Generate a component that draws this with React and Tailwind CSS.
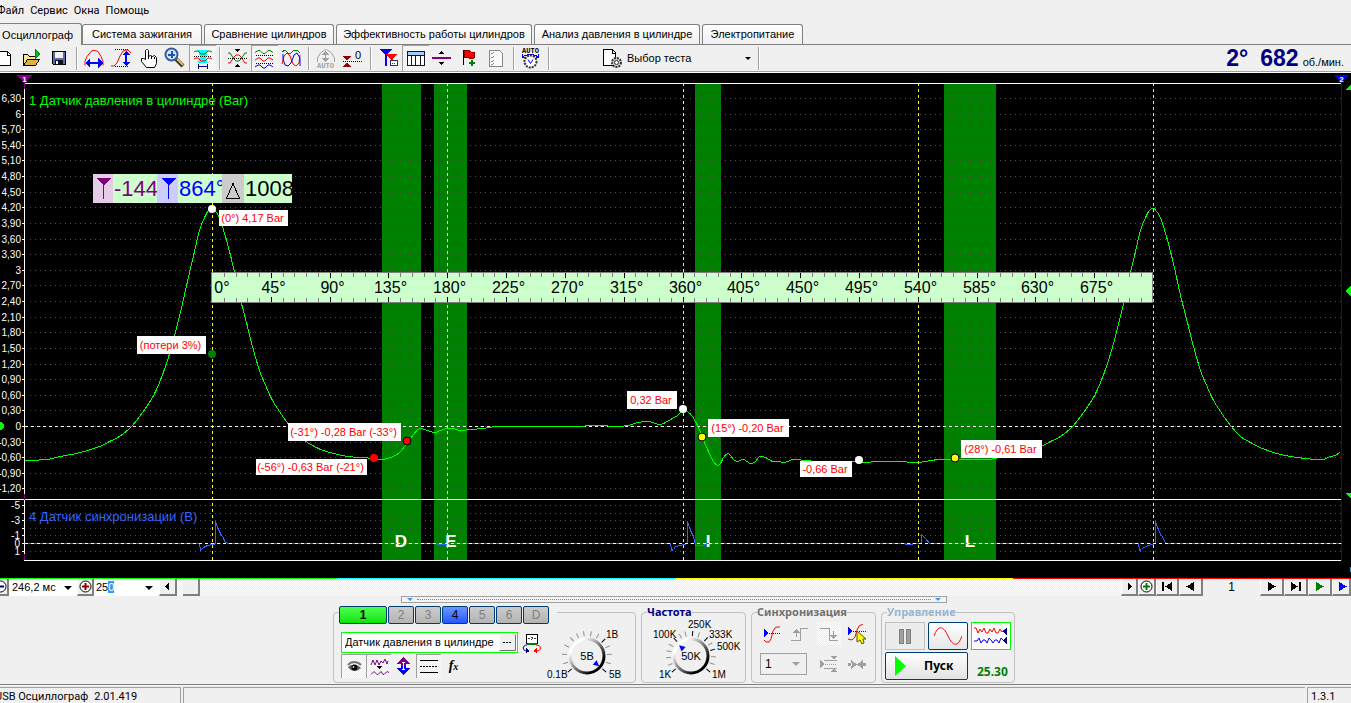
import React from 'react';

const TABS = [
  { label: 'Система зажигания', width: 'w-[120px]' },
  { label: 'Сравнение цилиндров', width: 'w-[130px]' },
  { label: 'Эффективность работы цилиндров', width: 'w-[196px]' },
  { label: 'Анализ давления в цилиндре', width: 'w-[166px]' },
  { label: 'Электропитание', width: 'w-[101px]' },
];

const HATCH = 'bg-[repeating-conic-gradient(#ffffff_0_25%,#ececec_0_50%)] bg-[length:2px_2px]';

// ---------- Toolbar ----------

const Icon = ({ children, w = 26, h = 26 }) => (
  <svg width={w} height={h} viewBox={`0 0 ${w} ${h}`} fill="none" className="block shrink-0" shapeRendering="crispEdges" aria-hidden="true">
    {children}
  </svg>
);

const ToolButton = ({ label, active, children }) => (
  <button
    type="button"
    aria-label={label}
    aria-pressed={active}
    className={`h-[26px] w-[27px] shrink-0 overflow-hidden ${active ? `border-t border-l border-[#a0a0a0] ${HATCH}` : ''}`}
  >
    {children}
  </button>
);

const Separator = () => <div className="mx-[3px] mt-0.5 h-[23px] w-0.5 shrink-0 border-l border-[#a0a0a0] bg-white" />;

const IconOpen = () => (
  <Icon>
    <path d="M4.500 20.500V9.500h4l2 2h6v3" stroke="#000" fill="#ffe48a" />
    <path d="M4.500 20.500l4-6h12l-4 6z" stroke="#000" fill="#d9b440" />
    <path d="M16 4v10l6-5z" fill="#008000" />
    <path d="M17 6v6l4-3z" fill="#00c020" />
  </Icon>
);

const IconSave = () => (
  <Icon>
    <path d="M6.500 6.500h13v13h-12l-1-1z" stroke="#000" fill="#5a6cb0" />
    <rect x="9" y="7" width="8" height="6" fill="#f4f4f4" />
    <rect x="9" y="15" width="8" height="5" fill="#101020" />
    <rect x="10" y="16" width="2" height="3" fill="#fff" />
  </Icon>
);

const IconPeriod = () => (
  <Icon>
    <path d="M4 20.500v-4l2-5 4-5 2-1h2l3 1 3 5 2 5v4" stroke="#ff0000" shapeRendering="auto" />
    <path d="M7 18h12" stroke="#0000ff" strokeWidth="2" />
    <path d="M9 13v10l-5-5zM17 13v10l5-5z" fill="#0000ff" />
  </Icon>
);

const IconAmplitude = () => (
  <Icon>
    <path d="M7 4.500h13M7 21.500h14" stroke="#000" strokeDasharray="1 1" />
    <path d="M3 21h3l3-3 3-7 3-5 3-1h2l3 3" stroke="#ff0000" shapeRendering="auto" />
    <path d="M18 8v10" stroke="#0000ff" strokeWidth="2" />
    <path d="M14 10h8l-4-4zM14 17h8l-4 4z" fill="#0000ff" />
  </Icon>
);

const IconHand = () => (
  <Icon>
    <path d="M10.500 14.500V5.500l1-1h1l1 1v6l2-1 2 1 2-1 2 2v6l-2 4h-8l-5-6v-3h2z" stroke="#000" fill="#fff" shapeRendering="auto" />
    <path d="M13.500 11v3M16.500 11v3M19.500 12v2" stroke="#000" />
  </Icon>
);

const IconZoom = () => (
  <Icon>
    <path d="M14 14l7 7" stroke="#403010" strokeWidth="4" shapeRendering="auto" />
    <path d="M15 14l6 6" stroke="#e0c070" strokeWidth="2" shapeRendering="auto" />
    <circle cx="9.500" cy="9.500" r="6" fill="#cfe4ff" stroke="#3a5a9a" strokeWidth="2" shapeRendering="auto" />
    <path d="M6 9.500h7M9.500 6v7" stroke="#2050b0" strokeWidth="2" />
  </Icon>
);

const IconFit = () => (
  <Icon>
    <path d="M8 4h10l-2 7 2 6H8l2-6z" fill="#00ffff" />
    <path d="M4 6l2-1h2l3 3h4l3-3h2l2 1" stroke="#008000" shapeRendering="auto" />
    <path d="M4 10.500h18" stroke="#000" strokeDasharray="1 1" />
    <path d="M4 13l2-1h2l3 3h4l3-3h2l2 1" stroke="#ff0000" shapeRendering="auto" />
    <path d="M8.500 18v5M17.500 18v5M9 20.500h8" stroke="#000080" />
  </Icon>
);

const IconCross = () => (
  <Icon>
    <path d="M4 8h2l4 6 2 2h3l2-2 4-6h2" stroke="#008000" shapeRendering="auto" />
    <path d="M4 18h2l4-6 2-2h3l2 2 4 6h2" stroke="#ff0000" shapeRendering="auto" />
    <path d="M4 13.500h19" stroke="#000" strokeDasharray="1 1" />
    <path d="M10 4h6l-3 3zM10 22h6l-3-3z" fill="#000" />
  </Icon>
);

const Wave = ({ y, color }) => <path d={`M3 ${y + 2}l3-2h2l3 3h2l3-3h2l3 2`} stroke={color} shapeRendering="auto" />;

const IconWaves = () => (
  <Icon>
    <Wave y={4.5} color="#008000" />
    <Wave y={12} color="#ff0000" />
    <Wave y={19} color="#0000ff" />
    <path d="M4 9.500h18M4 17.500h18" stroke="#000" strokeDasharray="1 1" />
  </Icon>
);

const IconWavesMixed = () => (
  <Icon>
    <path d="M4 7l3-2 3 3h3l3-3h3l3 3" stroke="#008000" />
    <path d="M4 19l2-8 3-3 3 3 3 8 3 2 3-3 1-8" stroke="#ff0000" shapeRendering="auto" />
    <path d="M5 9v5l2 6 3 1 3-3 3-8 3-2 3 5v8" stroke="#0000ff" shapeRendering="auto" />
  </Icon>
);

const IconAuto = () => (
  <Icon>
    <path d="M4.500 17v-4l3-5 4-3h3l4 3 3 5v4" stroke="#a0a0a0" shapeRendering="auto" />
    <path d="M12.500 7v9" stroke="#a0a0a0" />
    <path d="M9 10h7l-3.500-4zM9 13h7l-3.500 4z" fill="#a0a0a0" />
    <text x="12.500" y="23" textAnchor="middle" fill="#a0a0a0" className="font-['Liberation_Mono'] text-[7px] font-bold">AUTO</text>
  </Icon>
);

const IconZero = () => (
  <Icon>
    <path d="M3 11h8l-4 5zM3 22h8l-4-5z" fill="#900000" />
    <path d="M3 16.500h19" stroke="#000" strokeDasharray="1 1" />
    <text x="15" y="14" fill="#000" className="font-['Liberation_Sans'] text-[11px]">0</text>
  </Icon>
);

const IconMarkers = () => (
  <Icon>
    <path d="M4 4h13l-5 6v11h-2V10z" fill="#0000ff" />
    <path d="M10 9h12l-4 5v6h-2v-6z" fill="#ff0000" />
    <rect x="15.500" y="15.500" width="7" height="5" fill="#fff" stroke="#303060" />
    <path d="M17 18.500h4" stroke="#303060" strokeDasharray="1 1" />
  </Icon>
);

const IconTable = () => (
  <Icon>
    <rect x="4.500" y="5.500" width="17" height="14" fill="#fff" stroke="#101828" />
    <rect x="5" y="6" width="16" height="3" fill="#a6cdf4" />
    <path d="M5 9.500h16M8.500 9v10M12.500 9v10M17.500 9v10" stroke="#101828" />
  </Icon>
);

const IconSplit = () => (
  <Icon>
    <path d="M3 13h19" stroke="#800080" strokeWidth="2" />
    <path d="M10 9h5l-2.500-3zM10 17h5l-2.500 3z" fill="#000" />
  </Icon>
);

const IconFlag = () => (
  <Icon>
    <path d="M7.500 5v15" stroke="#000" />
    <path d="M8 6l4-1 3 2h3v6l-3 1-3-2-4 1z" fill="#ff0000" stroke="#900000" />
    <path d="M16 15v6M13 18h6" stroke="#008000" strokeWidth="2" />
  </Icon>
);

const IconChecklist = () => (
  <Icon>
    <path d="M6.500 5.500h10l3 3v13h-13z" fill="#fafafa" stroke="#888" />
    <path d="M8 8l1 1 2-2M8 12l1 1 2-2M8 16l1 1 2-2M8 20l1 0 2-2" stroke="#888" shapeRendering="auto" />
  </Icon>
);

const IconAutoVolt = () => (
  <Icon>
    <text x="12.500" y="8" textAnchor="middle" fill="#000" className="font-['Liberation_Mono'] text-[7px] font-bold">AUTO</text>
    <path d="M5 12c3-3 12-3 15 0M4.500 9v3h3M20.500 9v3h-3" stroke="#0000ff" />
    <circle cx="12.500" cy="16.500" r="6" stroke="#333" strokeDasharray="2 1" strokeWidth="2" fill="#fff" shapeRendering="auto" />
    <path d="M10 14.500l2.500 4 2.500-4" stroke="#0000ff" shapeRendering="auto" />
  </Icon>
);

const Toolbar = () => (
  <div className="flex h-[27px] items-start border-b border-[#a0a0a0]">
    <button type="button" aria-label="Создать" className="h-[26px] w-[19px] shrink-0 overflow-hidden">
      <Icon>
        <path d="M-2 6.500h9.500l3 3v10.500H-2z" fill="#fff" stroke="#000" />
        <path d="M7.500 6v4h3" stroke="#000" />
      </Icon>
    </button>
    <ToolButton label="Открыть"><IconOpen /></ToolButton>
    <ToolButton label="Сохранить"><IconSave /></ToolButton>
    <Separator />
    <ToolButton label="Период"><IconPeriod /></ToolButton>
    <ToolButton label="Амплитуда"><IconAmplitude /></ToolButton>
    <ToolButton label="Рука"><IconHand /></ToolButton>
    <ToolButton label="Масштаб"><IconZoom /></ToolButton>
    <ToolButton label="Вписать" active><IconFit /></ToolButton>
    <Separator />
    <ToolButton label="Совместить"><IconCross /></ToolButton>
    <ToolButton label="Раздельно" active><IconWaves /></ToolButton>
    <ToolButton label="Вместе"><IconWavesMixed /></ToolButton>
    <Separator />
    <ToolButton label="Авто"><IconAuto /></ToolButton>
    <ToolButton label="Ноль"><IconZero /></ToolButton>
    <Separator />
    <ToolButton label="Маркеры"><IconMarkers /></ToolButton>
    <ToolButton label="Таблица" active><IconTable /></ToolButton>
    <ToolButton label="Разделитель"><IconSplit /></ToolButton>
    <ToolButton label="Флаг"><IconFlag /></ToolButton>
    <ToolButton label="Список"><IconChecklist /></ToolButton>
    <Separator />
    <ToolButton label="Автонастройка"><IconAutoVolt /></ToolButton>
    <Separator />
    <button type="button" className="flex h-[27px] w-[202px] shrink-0 items-center pl-[48px] pr-1">
      <Icon>
        <path d="M2.500 3.500h9l3 3v13h-12z" fill="#fff" stroke="#000" />
        <path d="M11.500 3v4h3" stroke="#000" />
        <circle cx="15.500" cy="16.500" r="4.500" fill="#c8dcc8" stroke="#333" strokeWidth="2" strokeDasharray="2 1" shapeRendering="auto" />
        <circle cx="15.500" cy="16.500" r="2" fill="#fff" stroke="#333" shapeRendering="auto" />
      </Icon>
      <span className="grow text-left">Выбор теста</span>
      <span className="border-x-[3px] border-t-[3px] border-x-transparent border-t-black" />
    </button>
    <Separator />
    <div className="ml-auto flex items-baseline pr-[7px] font-['Liberation_Sans',sans-serif] text-[23px] leading-[27px] font-bold text-[#000080]">
      <span>2°</span>
      <span className="ml-3">682</span>
      <span className="ml-1 text-[11px] font-normal text-black">об./мин.</span>
    </div>
  </div>
);

// ---------- Oscillogram ----------

const CHART_W = 1351;
const CHART_H = 505;
const LEFT = 25;
const RIGHT = 1341;
const yBar = (v) => Math.round(353 - v * 52.08) + 0.5;
const xDeg = (d) => Math.round(212 + (d * 941) / 720) + 0.5;

const BAR_TICKS = Array.from({ length: 26 }, (_, i) => Math.round((6.3 - i * 0.3) * 10) / 10);
const formatBar = (v) => (Number.isInteger(v) ? `${v}` : v.toFixed(2).replace('.', ','));

const SYNC_TICKS = [
  { y: 432.5, label: '-5' },
  { y: 440.5 },
  { y: 447.5, label: '-3' },
  { y: 455.5 },
  { y: 462.5, label: '-1' },
  { y: 470.5, label: '0' },
  { y: 478.5, label: '1' },
];

const BANDS = [
  { x: 382, w: 39, letter: 'D', lx: 401 },
  { x: 434, w: 33, letter: 'E', lx: 451 },
  { x: 695, w: 26, letter: 'I', lx: 708 },
  { x: 944, w: 52, letter: 'L', lx: 970 },
];

const PRESSURE = [
  [25, 387], [46, 386], [60, 383], [80, 379], [99, 373], [109, 368], [119, 363], [131, 353], [142, 339], [152, 324],
  [159, 309], [166, 290], [172, 270], [178, 247], [182, 230], [189, 199], [194, 178], [199, 157], [204, 144], [208, 137],
  [212, 135], [215, 138], [218, 142], [222, 153], [229, 178], [234, 199], [239, 222], [246, 249], [252, 273], [259, 297],
  [266, 314], [272, 327], [281, 341], [289, 352], [298, 362], [307, 369], [320, 376], [333, 380], [347, 383], [360, 384],
  [374, 385], [382, 386], [393, 383], [400, 378], [407, 369], [413, 361], [419, 355], [427, 357], [434, 359], [440, 357],
  [447, 355], [453, 355], [460, 357], [470, 356], [483, 355], [500, 353], [567, 353], [600, 352], [613, 353], [628, 352],
  [637, 349], [647, 348], [652, 349], [659, 351], [663, 350], [672, 345], [677, 342], [683, 336], [687, 338], [692, 343],
  [697, 352], [702, 364], [707, 376], [713, 388], [717, 392], [720, 390], [723, 384], [727, 380], [730, 382], [733, 386],
  [737, 388], [743, 386], [750, 390], [755, 388], [759, 383], [765, 384], [772, 388], [778, 388], [784, 389], [792, 386],
  [797, 386], [805, 387], [830, 389], [855, 388], [859, 387], [863, 389], [877, 388], [900, 388], [917, 389], [940, 386],
  [987, 386], [1001, 383], [1021, 379], [1040, 373], [1050, 368], [1060, 363], [1072, 353], [1083, 339], [1093, 324],
  [1100, 309], [1107, 290], [1113, 270], [1119, 247], [1123, 230], [1130, 199], [1135, 178], [1140, 157], [1145, 144],
  [1149, 137], [1153, 135], [1156, 138], [1159, 142], [1163, 153], [1170, 178], [1175, 199], [1180, 222], [1187, 249],
  [1193, 273], [1200, 297], [1207, 314], [1213, 327], [1222, 341], [1230, 352], [1240, 363], [1250, 369], [1262, 375],
  [1280, 381], [1297, 384], [1315, 386], [1323, 386], [1330, 383], [1335, 382], [1340, 378],
];

const SYNC = [
  [25, 470], [199, 470], [200, 477], [201, 476], [203, 474], [207, 472], [213, 471], [215, 470], [215, 448], [217, 454],
  [221, 462], [223, 464], [224, 468], [227, 470], [436, 470], [438, 471], [445, 471], [448, 470], [670, 470], [671, 477],
  [673, 476], [675, 473], [680, 472], [687, 470], [687, 448], [690, 457], [693, 463], [695, 472], [702, 472], [708, 470],
  [904, 470], [906, 471], [911, 471], [913, 470], [921, 470], [921, 461], [925, 465], [929, 470], [1138, 470], [1139, 477],
  [1141, 476], [1143, 474], [1148, 472], [1155, 470], [1155, 448], [1159, 459], [1163, 465], [1165, 470], [1341, 470],
];

const toPoints = (list) => list.map(([x, y]) => `${x + 0.5},${y + 0.5}`).join(' ');

// Catmull-Rom spline through the samples
const toCurve = (list) => {
  const p = list.map(([x, y]) => [x + 0.5, y + 0.5]);
  let d = `M${p[0][0]} ${p[0][1]}`;
  for (let i = 0; i < p.length - 1; i++) {
    const a = p[i - 1] || p[i];
    const b = p[i];
    const c = p[i + 1];
    const e = p[i + 2] || c;
    d += `C${b[0] + (c[0] - a[0]) / 6} ${b[1] + (c[1] - a[1]) / 6} ${c[0] - (e[0] - b[0]) / 6} ${c[1] - (e[1] - b[1]) / 6} ${c[0]} ${c[1]}`;
  }
  return d;
};

const CALLOUTS = [
  { text: '(0°) 4,17 Bar', x: 219, y: 137, w: 69, h: 16 },
  { text: '(потери 3%)', x: 137, y: 263, w: 69, h: 18 },
  { text: '(-31°) -0,28 Bar (-33°)', x: 288, y: 350, w: 113, h: 18 },
  { text: '(-56°) -0,63 Bar (-21°)', x: 256, y: 386, w: 111, h: 16 },
  { text: '0,32 Bar', x: 627, y: 318, w: 50, h: 18 },
  { text: '(15°) -0,20 Bar', x: 708, y: 346, w: 81, h: 18 },
  { text: '-0,66 Bar', x: 800, y: 388, w: 52, h: 16 },
  { text: '(28°) -0,61 Bar', x: 961, y: 367, w: 81, h: 18 },
];

const POINTS = [
  { x: 212, y: 136, fill: '#ffffff' },
  { x: 212, y: 281, fill: '#008000' },
  { x: 374, y: 385, fill: '#ff0000' },
  { x: 407, y: 368, fill: '#ff0000', ring: true },
  { x: 683, y: 336, fill: '#ffffff' },
  { x: 702, y: 364, fill: '#ffff00', ring: true },
  { x: 859, y: 387, fill: '#ffffff' },
  { x: 955, y: 385, fill: '#ffff00', ring: true },
];

const MarkerReadout = () => (
  <svg x="93" y="101" width="199" height="29">
    <rect width="199" height="29" fill="#ccffcc" />
    <rect width="20" height="29" fill="#e6cce6" />
    <path d="M3 4h15l-7 7v14h-1V11z" fill="#800080" />
    <text x="21" y="22" fill="#800080" className="text-[22px]">-144°</text>
    <rect x="64" width="135" height="29" fill="#ccffcc" />
    <rect x="64" width="21" height="29" fill="#ccccff" />
    <path d="M68 4h15l-7 7v14h-1V11z" fill="#0000ff" />
    <text x="86" y="22" fill="#0000ff" className="text-[22px]">864°</text>
    <rect x="129" width="70" height="29" fill="#ccffcc" />
    <rect x="129" width="22" height="29" fill="#cccccc" />
    <path d="M133.500 24.500h13l-6.500-15z" fill="none" stroke="#000" />
    <text x="152" y="22" fill="#000" className="text-[22px]">1008°</text>
  </svg>
);

const DegreeRuler = () => (
  <g>
    <rect x="211.500" y="199.500" width="941" height="30" fill="#ccffcc" stroke="#808080" />
    {Array.from({ length: 79 }, (_, i) => (i + 1) * 9).map((d) => {
      const major = d % 45 === 0;
      const len = major ? 5 : 4;
      return (
        <path key={d} d={`M${xDeg(d)} 200v${len}M${xDeg(d)} ${229 - len}v${len}`} stroke={major ? '#000' : '#808080'} />
      );
    })}
    {Array.from({ length: 16 }, (_, i) => i * 45).map((d) => (
      <text key={d} x={d === 0 ? 222 : xDeg(d) + 2} y="220" textAnchor="middle" fill="#000" className="text-[16px]">
        {d}°
      </text>
    ))}
  </g>
);

const Oscillogram = () => (
  <svg
    viewBox={`0 0 ${CHART_W} ${CHART_H}`}
    className="block w-full bg-black font-['Liberation_Sans',sans-serif]"
    shapeRendering="crispEdges"
    role="img"
    aria-label="Осциллограмма"
  >
    {BANDS.map((b) => (
      <rect key={b.letter} x={b.x} y="11" width={b.w} height="476" fill="#008000" />
    ))}

    {/* grid */}
    {BAR_TICKS.map((v) => (
      <g key={v}>
        <path d={`M30 ${yBar(v)}H${RIGHT}`} stroke="#555055" strokeDasharray="1 4" />
        <path d={`M22 ${yBar(v)}h3`} stroke="#fff" />
        <text x="21" y={yBar(v) + 3} textAnchor="end" fill="#fff" className="text-[10px]">{formatBar(v)}</text>
      </g>
    ))}
    {SYNC_TICKS.map((t) => (
      <g key={t.y}>
        <path d={`M30 ${t.y}H${RIGHT}`} stroke="#555055" strokeDasharray="1 4" />
        <path d={`M22 ${t.y}h3`} stroke="#fff" />
        <text x="20" y={t.y + 3} textAnchor="end" fill="#fff" className="text-[10px]">{t.label}</text>
      </g>
    ))}

    {/* frame */}
    <path d={`M${LEFT} 10.500H${RIGHT}M0 426.500H${RIGHT}M${LEFT} 487.500H${RIGHT}M24.500 10V488`} stroke="#fff" />
    <path d="M24.500 10v6M24.500 421v6M24.500 481v6" stroke="#800080" />
    <path d="M1341.500 4V488" stroke="#0000ff" />

    {/* traces */}
    <text x="29" y="32" fill="#00ff00" className="text-[13px]">1 Датчик давления в цилиндре (Bar)</text>
    <text x="29" y="448" fill="#3366ff" className="text-[13px]">4 Датчик синхронизации (В)</text>
    {BANDS.map((b) => (
      <text key={b.letter} x={b.lx} y="474" textAnchor="middle" fill="#fff" className="text-[17px] font-bold">{b.letter}</text>
    ))}
    <polyline points={toPoints(SYNC)} fill="none" stroke="#3366ff" />
    <path d={`M${LEFT} 353.500H${RIGHT}M${LEFT} 470.500H${RIGHT}`} stroke="#fff" strokeDasharray="3 3" />
    <path d={toCurve(PRESSURE)} fill="none" stroke="#00ff00" />
    {[0, 180, 360, 540, 720].map((d) => (
      <path key={d} d={`M${xDeg(d)} 10V487`} stroke="#ffff00" strokeDasharray="3 3" />
    ))}

    <DegreeRuler />
    <MarkerReadout />

    {POINTS.map((p) => (
      <circle key={`${p.x}-${p.y}`} cx={p.x} cy={p.y} r="4" fill={p.fill} stroke={p.ring ? '#000' : 'none'} shapeRendering="auto" />
    ))}
    {CALLOUTS.map((c) => (
      <g key={c.text}>
        <rect x={c.x} y={c.y} width={c.w} height={c.h} fill="#fff" />
        <text x={c.x + c.w / 2 - 1} y={c.y + c.h / 2 + 4} textAnchor="middle" fill="#ff0000" className="text-[11px]">{c.text}</text>
      </g>
    ))}

    {/* cursor handles */}
    <path d="M17 2h15l-7.500 8z" fill="#800080" />
    <text x="24.500" y="9" textAnchor="middle" fill="#fff" className="text-[8px] font-bold">1</text>
    <path d="M1334 2h15l-7.500 8z" fill="#0000ff" />
    <text x="1341.500" y="9" textAnchor="middle" fill="#fff" className="text-[8px] font-bold">2</text>
    <path d="M1351 11l-6 6h6zM1351 213l-6 5 6 6zM1345 420h6v6z" fill="#00ff00" />
    <circle cx="0" cy="353" r="4" fill="#00ff00" />
    <rect x="1350" y="494" width="1" height="5" fill="#2aa0c0" />
  </svg>
);

const CylinderStrip = () => (
  <div className="flex h-px">
    <div className="grow bg-[#00ff00]" />
    <div className="grow bg-[#00ffff]" />
    <div className="grow bg-[#ffff00]" />
    <div className="grow bg-[#ff0000]" />
  </div>
);

// ---------- Navigation bar ----------

const RaisedButton = ({ label, width, children }) => (
  <button
    type="button"
    aria-label={label}
    className={`flex h-[17px] shrink-0 items-center justify-center border-r-2 border-b-2 border-l border-r-[#808080] border-b-[#808080] border-l-white bg-[#f0f0f0] ${width}`}
  >
    {children}
  </button>
);

const Glyph = ({ d, fill = '#000' }) => (
  <Icon w={13} h={9}>
    <path d={d} fill={fill} />
  </Icon>
);

const DownArrow = () => <span className="border-x-[4px] border-t-[4px] border-x-transparent border-t-black" />;

const CircleSign = ({ color, plus }) => (
  <svg width="13" height="13" viewBox="0 0 13 13" fill="none" className="block shrink-0" aria-hidden="true">
    <circle cx="6.500" cy="6.500" r="5.500" fill="#fff" stroke="#000" />
    <path d={plus ? 'M3 6.500h7M6.500 3v7' : 'M3 6.500h7'} stroke={color} strokeWidth="2" />
  </svg>
);

const NavBar = () => (
  <div className={`flex h-[17px] items-center ${HATCH}`}>
    <button type="button" aria-label="Уменьшить" className="flex h-[17px] w-[9px] shrink-0 items-center justify-end overflow-hidden border-r-2 border-b-2 border-[#808080] bg-[#f0f0f0]">
      <CircleSign color="#000080" />
    </button>
    <button type="button" className="flex h-[17px] w-[68px] shrink-0 items-center justify-between bg-white pl-[3px] pr-[5px] whitespace-nowrap">
      246,2 мс <DownArrow />
    </button>
    <RaisedButton label="Увеличить" width="w-[17px]"><CircleSign color="#900000" plus /></RaisedButton>
    <button type="button" className="flex h-[17px] w-[65px] shrink-0 items-center justify-between bg-white pl-[2px] pr-[6px]">
      <span>25<span className="bg-[#3399ff] text-white">0</span></span> <DownArrow />
    </button>
    <RaisedButton label="Влево" width="w-[18px]"><Glyph d="M8 0v9L4 4.500z" /></RaisedButton>
    <div className="ml-[6px] h-[17px] w-[17px] border-r-2 border-b-2 border-[#808080] bg-[#f0f0f0]" />
    <div className="grow" />
    <RaisedButton label="Вправо" width="w-[17px]"><Glyph d="M5 0v9l4-4.500z" /></RaisedButton>
    <RaisedButton label="Добавить" width="w-[18px]"><CircleSign color="#008000" plus /></RaisedButton>
    <RaisedButton label="В начало" width="w-[23px]"><Glyph d="M1 0h2v9H1zM11 0v9L4 4.500z" /></RaisedButton>
    <RaisedButton label="Назад" width="w-[24px]"><Glyph d="M10 0v9L2 4.500z" /></RaisedButton>
    <div className="h-[17px] w-[57px] bg-[#f0f0f0] text-center text-xs leading-[17px]">1</div>
    <RaisedButton label="Вперёд" width="w-[24px]"><Glyph d="M3 0v9l8-4.500z" /></RaisedButton>
    <RaisedButton label="В конец" width="w-[24px]"><Glyph d="M10 0h2v9h-2zM2 0v9l7-4.500z" /></RaisedButton>
    <RaisedButton label="Воспроизвести" width="w-[24px]"><Glyph d="M3 0v9l8-4.500z" fill="#008000" /></RaisedButton>
    <RaisedButton label="Дальше" width="w-[19px]"><Glyph d="M4 0v9l8-4.500z" fill="#0000ff" /></RaisedButton>
  </div>
);

const Splitter = () => (
  <div className="flex h-[7px] w-[546px] items-center gap-1 border border-[#a0a0a0] bg-[#f4f4f4] px-[5px]">
    <span className="border-x-[3px] border-t-[3px] border-x-transparent border-t-[#3399ff]" />
    <span className="grow border-t border-dotted border-[#3399ff]" />
    <span className="border-x-[3px] border-t-[3px] border-x-transparent border-t-[#3399ff]" />
  </div>
);

// ---------- Control panel ----------

const Group = ({ title, titleColor, width, children }) => (
  <fieldset className={`h-[77px] shrink-0 rounded-[4px] border border-[#c0c0c0] ${width}`}>
    <legend className={`ml-[5px] h-3 font-['Noto_Sans',sans-serif] text-[11px] leading-3 font-bold ${titleColor}`}>{title}</legend>
    {children}
  </fieldset>
);

const CHANNELS = ['2', '3', '4', '5', '6', 'D'];

const ChannelTabs = () => (
  <div className="flex h-[18px] gap-px pr-2 font-['Liberation_Sans',sans-serif] text-xs font-normal">
    <button type="button" className="h-[18px] w-[48px] rounded-[2px] border border-[#003c74] bg-linear-to-b from-[#4cff4c] to-[#00e400] leading-[16px] font-bold text-black">1</button>
    {CHANNELS.map((c) => (
      <button
        key={c}
        type="button"
        className={`h-[18px] w-[26px] rounded-[2px] border border-[#003c74] bg-linear-to-b leading-[16px] ${c === '4' ? 'from-[#6c94ff] to-[#2456ff] text-black' : 'from-[#cccccc] to-[#b4b4b4] text-[#808080]'}`}
      >
        {c}
      </button>
    ))}
  </div>
);

const SmallToggle = ({ label, active, children }) => (
  <button
    type="button"
    aria-label={label}
    aria-pressed={active}
    className={`flex h-6 w-[25px] items-center justify-center ${active ? `border-t border-l border-[#a0a0a0] ${HATCH}` : ''}`}
  >
    {children}
  </button>
);

// angles are in degrees, clockwise from 12 o'clock
const Knob = ({ w, cx, cy, value, pointer, ticks, majors, labels, label }) => (
  <svg width={w} height="65" viewBox={`0 0 ${w} 65`} role="slider" aria-label={label} aria-valuetext={value} aria-valuenow="0" className="block shrink-0 font-['Liberation_Sans',sans-serif]">
    <defs>
      <linearGradient id={`rim-${label}`} x1="0" y1="0" x2="1" y2="1">
        <stop offset="0.2" stopColor="#fff" />
        <stop offset="0.8" stopColor="#000" />
      </linearGradient>
    </defs>
    {ticks.map((a) => (
      <path key={a} d={`M${cx} ${cy - 20}v-5`} stroke={majors.includes(a) ? '#000' : '#909090'} transform={`rotate(${a} ${cx} ${cy})`} />
    ))}
    <circle cx={cx} cy={cy} r="17" fill="#f0f0f0" stroke={`url(#rim-${label})`} strokeWidth="3" />
    <path d={`M${cx - 3} ${cy - 10}h6l-3-6z`} fill="#0000ff" transform={`rotate(${pointer} ${cx} ${cy})`} />
    <text x={cx} y={cy + 4} textAnchor="middle" fill="#000" className="text-[11px]">{value}</text>
    {labels.map((l) => (
      <text key={l.text} x={l.x} y={l.y} fill="#000" className="text-[10px]">{l.text}</text>
    ))}
  </svg>
);

const ChannelGroup = () => (
  <Group title={<ChannelTabs />} titleColor="text-black" width="w-[303px]">
    <div className="flex">
      <div className="w-[210px] shrink-0 pt-[14px] pl-[7px]">
        <div className="flex items-center gap-1">
          <div className="flex h-[21px] w-[177px] items-center border border-[#00ff00] bg-white pr-px">
            <input aria-label="Название канала" defaultValue="Датчик давления в цилиндре" className="min-w-0 grow bg-transparent pl-[3px] font-['Liberation_Sans',sans-serif] text-[11px] outline-none" />
            <button type="button" aria-label="Выбрать датчик" className="flex h-[17px] w-[17px] shrink-0 items-center justify-center border border-r-[#707070] border-b-[#707070] border-l-white border-t-white bg-[#f0f0f0]">
              <Icon w={9} h={3}><path d="M0 1.500h2M3 1.500h2M6 1.500h2" stroke="#000" /></Icon>
            </button>
          </div>
          <Icon w={20} h={20}>
            <rect x="4.500" y="1.500" width="11" height="9" fill="#fff" stroke="#000" />
            <path d="M6 5h2M9 4h2M12 5h2M9 7l2-2" stroke="#444" />
            <path d="M5 11h10" stroke="#008000" strokeWidth="2" />
            <path d="M5 12c-5 0-5 6 0 6" stroke="#000080" shapeRendering="auto" />
            <path d="M4 15v5l4-2z" fill="#000080" />
            <path d="M14 12c6 0 6 6 0 6" stroke="#ff0000" shapeRendering="auto" />
            <path d="M15 15v5l-4-2z" fill="#ff0000" />
          </Icon>
        </div>
        <div className="mt-px flex">
          <SmallToggle label="Показать" active>
            <svg width="15" height="12" viewBox="0 0 15 12" aria-hidden="true">
              <path d="M1 4c3-4 9-4 13 0" fill="none" stroke="#777" strokeWidth="2" />
              <path d="M1 6c3-3 9-3 13 1-4 4-10 4-13-1z" fill="#666" />
              <circle cx="7.500" cy="6.500" r="3" fill="#000" />
              <circle cx="6.500" cy="6" r="1" fill="#ccc" />
            </svg>
          </SmallToggle>
          <SmallToggle label="Фильтр" active>
            <Icon w={19} h={18}>
              <path d="M1 7l2-5 2 5 2-5 2 5 2-4 2 2 2-4 2 5 1-3" stroke="#800080" shapeRendering="auto" />
              <path d="M6 8h6l-3 3z" fill="#000" />
              <path d="M1 16.500l3-3 3 3h1l3-3 2 3h1l3-3 2 1" stroke="#800080" shapeRendering="auto" />
            </Icon>
          </SmallToggle>
          <SmallToggle label="Смещение">
            <Icon w={15} h={18}>
              <path d="M7.500 0l7 7H10v2H5V7H0.500z" fill="#800080" />
              <path d="M7.500 18l7-7H10V9H5v2H0.500z" fill="#0000ff" />
              <path d="M7.500 5v8M6 5.500h3M6 12.500h3" stroke="#fff" />
            </Icon>
          </SmallToggle>
          <SmallToggle label="Линии" active>
            <Icon w={18} h={15}>
              <path d="M0 1.500h18M0 13.500h18" stroke="#000" />
              <path d="M0 7.500h18" stroke="#000" strokeDasharray="2 1" />
            </Icon>
          </SmallToggle>
          <SmallToggle label="Функция">
            <span className="font-['Liberation_Serif',serif] text-sm leading-none font-bold italic">f<span className="text-[10px]">x</span></span>
          </SmallToggle>
        </div>
      </div>
      <Knob
        w={90}
        cx={43}
        cy={38}
        value="5В"
        label="Чувствительность"
        pointer={130}
        ticks={[-130, -108, -86, -64, -42, -25, -8, 10, 28, 47, 66, 86, 108, 130]}
        majors={[-130, 47, 130]}
        labels={[{ text: '0.1В', x: 3, y: 60 }, { text: '1В', x: 62, y: 20 }, { text: '5В', x: 65, y: 60 }]}
      />
    </div>
  </Group>
);

const FrequencyGroup = () => (
  <Group title="Частота" titleColor="text-[#000080]" width="w-[105px]">
    <Knob
      w={103}
      cx={49}
      cy={38}
      value="50K"
      label="Частота"
      pointer={-48}
      ticks={[-130, -112, -94, -78, -62, -44, -28, -14, 4, 20, 42, 58, 74, 92, 110, 130]}
      majors={[-130, -44, 4, 42, 74, 130]}
      labels={[
        { text: '250K', x: 46, y: 10 },
        { text: '100K', x: 11, y: 20 },
        { text: '333K', x: 67, y: 20 },
        { text: '500K', x: 75, y: 32 },
        { text: '1K', x: 17, y: 60 },
        { text: '1M', x: 70, y: 60 },
      ]}
    />
  </Group>
);

const SyncButton = ({ label, hatched, children }) => (
  <button type="button" aria-label={label} className={`flex h-[23px] w-[24px] items-center justify-center ${hatched ? HATCH : ''}`}>
    {children}
  </button>
);

const SyncGroup = () => (
  <Group title="Синхронизация" titleColor="text-[#707070]" width="w-[125px]">
    <div className="flex justify-between pt-1 pl-2 pr-[6px]">
      <SyncButton label="Уровень">
        <Icon w={18} h={18}>
          <path d="M1 4v8l5-4z" fill="#0000ff" />
          <path d="M6 8.500h12" stroke="#0000ff" strokeDasharray="1 1" />
          <path d="M1 15l2 2h3l2-3 2-8 2-3 2-1h3" stroke="#ff0000" shapeRendering="auto" />
        </Icon>
      </SyncButton>
      <SyncButton label="По фронту">
        <Icon w={18} h={16}>
          <path d="M0 14.500h9.500V2.500h7M5.500 4v7" stroke="#a0a0a0" />
          <path d="M2 7h7l-3.500-4z" fill="#a0a0a0" />
        </Icon>
      </SyncButton>
      <SyncButton label="По спаду" hatched>
        <Icon w={18} h={16}>
          <path d="M0 2.500h9.500v12h8M13.500 5v8" stroke="#a0a0a0" />
          <path d="M10 9h7l-3.500 4z" fill="#a0a0a0" />
        </Icon>
      </SyncButton>
      <SyncButton label="Выбрать точку">
        <Icon w={20} h={20}>
          <path d="M1 3v8l5-4z" fill="#0000ff" />
          <path d="M6 7.500h14" stroke="#0000ff" strokeDasharray="1 1" />
          <path d="M1 15l4 1 3-3 2-7 2-4 4-2" stroke="#ff0000" shapeRendering="auto" />
          <path d="M10 7v11l3-2 2 4 2-1-1-4h3z" fill="#ffff00" stroke="#605000" shapeRendering="auto" />
        </Icon>
      </SyncButton>
    </div>
    <div className="flex items-center pt-[7px] pl-2">
      <div className="relative flex h-[22px] w-[47px] items-center border border-[#a0a0a0]">
        <select aria-label="Канал синхронизации" className="h-full w-full appearance-none bg-transparent pl-1 text-xs text-black">
          <option>1</option>
        </select>
        <span className="pointer-events-none absolute right-[6px] border-x-[4px] border-t-[4px] border-x-transparent border-t-[#a0a0a0]" />
      </div>
      <div className="ml-[10px] flex gap-1">
        <SyncButton label="Диапазон">
          <Icon w={18} h={18}>
            <path d="M0 5v8l4-4zM11 1h6l-3 4zM11 17h6l-3-4z" fill="#a0a0a0" />
            <path d="M5 9.500h12" stroke="#a0a0a0" strokeDasharray="1 1" />
            <path d="M4 5.500h13M4 13.500h13" stroke="#a0a0a0" />
          </Icon>
        </SyncButton>
        <SyncButton label="Свести">
          <Icon w={18} h={10}>
            <path d="M3 1v9l6-4.500zM15 1v9L9 5.500zM0 4h4v3H0zM14 4h4v3h-4z" fill="#a0a0a0" />
          </Icon>
        </SyncButton>
      </div>
    </div>
  </Group>
);

const ControlGroup = () => (
  <Group title="Управление" titleColor="text-[#99b4d1]" width="w-[134px]">
    <div className="flex gap-[3px] pt-1 pl-[3px]">
      <button type="button" aria-label="Пауза" className="flex h-7 w-10 items-center justify-center gap-0.5 border border-[#c0c0c0] bg-[#ececec]">
        <span className="h-[15px] w-[5px] border border-[#808080] bg-[#a0a0a0]" />
        <span className="h-[15px] w-[5px] border border-[#808080] bg-[#a0a0a0]" />
      </button>
      <button type="button" aria-label="Одиночный сигнал" className="flex h-7 w-10 items-center justify-center rounded-[2px] border border-[#003c74] bg-linear-to-b from-white to-[#e6e6e6]">
        <svg width="28" height="20" viewBox="0 0 28 20" fill="none" aria-hidden="true">
          <path d="M0 10C4-1 9-1 14 10s10 11 14 0" stroke="#ff0000" />
        </svg>
      </button>
      <button type="button" aria-label="Непрерывный сигнал" className="flex h-7 w-10 items-center justify-center border border-[#00ff00] bg-white">
        <Icon w={34} h={20}>
          <path d="M0 2h2l2 5 2-4 2 3 2-4 2 5h2l2-4 2 3 2-4 2 5h2l2-4 2 3 2-2h3" stroke="#ff0000" shapeRendering="auto" />
          <path d="M0 15h3l2-3 2 5 2-3h2l2 3 2-5 2 2 2 3 2-3h2l2 3 2-5 3 3h3" stroke="#0000ff" shapeRendering="auto" />
          <path d="M33 2v7l-4-3.500zM33 11v7l-4-3.500z" fill="#000080" />
        </Icon>
      </button>
    </div>
    <div className="flex items-end pt-0.5 pl-[3px]">
      <button type="button" className="flex h-7 w-[83px] items-center rounded-[2px] border border-[#003c74] bg-linear-to-b from-white to-[#e2e2e2] pl-[9px] font-['Noto_Sans',sans-serif] text-xs font-bold">
        <svg width="11" height="20" viewBox="0 0 11 20" aria-hidden="true"><path d="M0 0l11 10L0 20z" fill="#00ff00" /></svg>
        <span className="ml-[18px]">Пуск</span>
      </button>
      <span className="ml-[9px] font-['Noto_Sans',sans-serif] text-xs leading-4 font-bold text-[#008000]">25.30</span>
    </div>
  </Group>
);

const StatusBar = () => (
  <div className="flex h-5 gap-0.5 border-t border-[#808080] pt-0.5 font-['Roboto',sans-serif] text-[11px]">
    <div className="flex w-[181px] shrink-0 gap-[6px] overflow-hidden border-t border-r border-t-[#a0a0a0] border-r-[#a0a0a0] leading-[17px] whitespace-nowrap">
      <span className="-ml-[5px]">USB Осциллограф</span>
      <span>2.01.419</span>
    </div>
    <div className="grow border-t border-l border-[#a0a0a0]" />
    <div className="w-[44px] shrink-0 border-t border-l border-[#a0a0a0] pl-[3px] leading-[17px]">1.3.1</div>
  </div>
);

export default function App() {
  return (
    <div className="overflow-hidden bg-[#f0f0f0] font-['Liberation_Sans',sans-serif] text-[11px] text-black">
      <nav className="flex h-[23px] items-center gap-[6px] font-['Roboto',sans-serif] text-[11px]">
        <button type="button" className="-ml-[3px]">Файл</button>
        <button type="button">Сервис</button>
        <button type="button">Окна</button>
        <button type="button">Помощь</button>
      </nav>

      <div role="tablist" className="flex h-[22px] items-end whitespace-nowrap">
        <button type="button" role="tab" aria-selected="true" className="h-[22px] w-[82px] shrink-0 rounded-tr-[3px] border-t border-r border-[#808080] pr-2 text-right leading-[20px]">
          Осциллограф
        </button>
        <div className="flex h-[22px] grow items-end gap-[2px] border-b border-[#808080]">
          {TABS.map((t) => (
            <button key={t.label} type="button" role="tab" aria-selected="false" className={`h-[20px] shrink-0 rounded-t-[3px] border border-b-0 border-[#808080] bg-linear-to-b from-white to-[#f0f0f0] leading-[19px] ${t.width}`}>
              {t.label}
            </button>
          ))}
        </div>
      </div>

      <Toolbar />
      <div className="h-px bg-white" />
      <Oscillogram />
      <CylinderStrip />
      <NavBar />

      <div className="flex flex-col items-center pr-[3px] pb-px">
        <Splitter />
        <div className="flex gap-[5px] pt-[3px]">
          <ChannelGroup />
          <FrequencyGroup />
          <SyncGroup />
          <ControlGroup />
        </div>
      </div>
      <StatusBar />
    </div>
  );
}
